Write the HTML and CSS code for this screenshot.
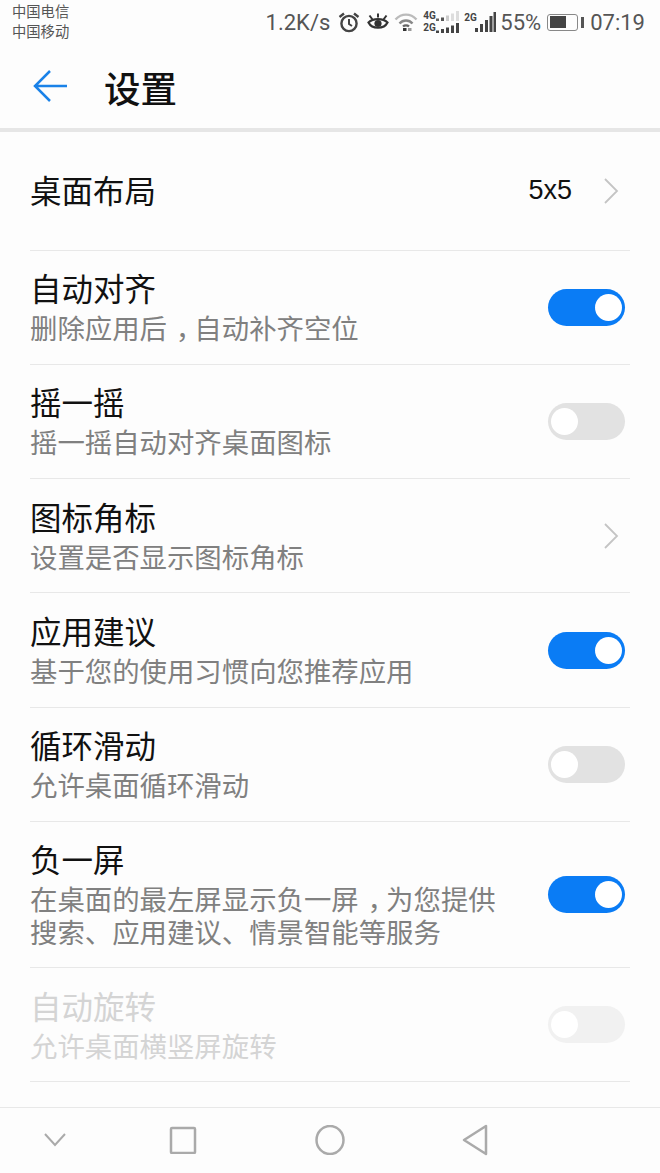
FILE: index.html
```html
<!DOCTYPE html>
<html lang="zh-CN">
<head>
    <meta charset="UTF-8">
    <meta name="viewport" content="width=device-width, initial-scale=1.0">
    <title>设置</title>
    <link rel="stylesheet" href="styles.css">
</head>
<body>

    <div class="screen">
        <!-- Status bar -->
        <div class="status-bar">
            <div class="carriers">
                <span>中国电信</span>
                <span>中国移动</span>
            </div>
            <div class="status-right">
                <span class="speed">1.2K/s</span>
                <svg class="ic-alarm" width="22" height="22" viewBox="0 0 22 22" fill="none" stroke="#444" stroke-width="2.400">
                    <circle cx="11" cy="12.500" r="7.600"/>
                    <path d="M11 8V13L14 15" stroke-width="2"/>
                    <path d="M1.500 6L6 2.500M20.500 6L16 2.500"/>
                </svg>
                <svg class="ic-eye" width="24" height="20" viewBox="0 0 24 20" fill="none" stroke="#333" stroke-width="2.200">
                    <path d="M2.500 10.500C7 6 17 6 21.500 10.500C18 17.500 6 17.500 2.500 10.500Z"/>
                    <circle cx="12" cy="11.500" r="3.600" fill="#333" stroke="none"/>
                    <path d="M3.500 3.500L6.500 7.500M12 1.500V5.500M20.500 3.500L17.500 7.500" stroke-width="2"/>
                </svg>
                <svg class="ic-wifi" width="24" height="20" viewBox="0 0 24 20" fill="none">
                    <path d="M1.500 7.500C7.500 1 16.500 1 22.500 7.500" stroke="#bbb" stroke-width="2.400"/>
                    <path d="M5.500 11.500C9 7.500 15 7.500 18.500 11.500" stroke="#888" stroke-width="2.400"/>
                    <path d="M9 14.500C10.500 13 13.500 13 15 14.500" stroke="#666" stroke-width="2.200"/>
                    <rect x="9" y="16" width="3.500" height="3" fill="#333"/>
                    <rect x="14" y="16" width="3.500" height="3" fill="#999"/>
                </svg>
                <div class="sim sim-double">
                    <div class="sim-labels"><span>4G</span><span>2G</span></div>
                    <svg width="23" height="24" viewBox="0 0 23 24">
                        <rect x="0" y="8.500" width="3" height="2.500" fill="#666"/>
                        <rect x="5" y="7.500" width="3" height="3.500" fill="#555"/>
                        <rect x="10" y="5.500" width="3" height="5.500" fill="#ccc"/>
                        <rect x="15" y="3.500" width="3" height="7.500" fill="#ddd"/>
                        <rect x="20" y="1" width="3" height="10" fill="#ddd"/>
                        <rect x="0" y="20.500" width="3" height="2.500" fill="#444"/>
                        <rect x="5" y="19" width="3" height="4" fill="#444"/>
                        <rect x="10" y="17.500" width="3" height="5.500" fill="#444"/>
                        <rect x="15" y="15.500" width="3" height="7.500" fill="#444"/>
                        <rect x="20" y="13" width="3" height="10" fill="#444"/>
                    </svg>
                </div>
                <div class="sim sim-single">
                    <span class="sim-tag">2G</span>
                    <svg width="21" height="20" viewBox="0 0 21 20">
                        <rect x="0" y="16" width="3" height="4" fill="#444"/>
                        <rect x="5" y="12" width="3" height="8" fill="#444"/>
                        <rect x="10" y="8" width="3" height="12" fill="#444"/>
                        <rect x="14.500" y="4" width="3" height="16" fill="#444"/>
                        <rect x="18.500" y="0" width="2.500" height="20" fill="#444"/>
                    </svg>
                </div>
                <span class="battery-text">55%</span>
                <div class="battery">
                    <div class="battery-body"><div class="battery-level"></div></div>
                    <div class="battery-tip"></div>
                </div>
                <span class="clock">07:19</span>
            </div>
        </div>

        <!-- Title -->
        <div class="title-bar">
            <svg class="back" width="36" height="34" viewBox="0 0 36 34" fill="none" stroke="#1a82e8" stroke-width="2.500">
                <path d="M17 2L2 17L17 32M2 17H34"/>
            </svg>
            <h1>设置</h1>
        </div>

        <!-- Settings list -->
        <div class="list">
            <div class="row row-single">
                <div class="row-text"><div class="row-title">桌面布局</div></div>
                <span class="row-value">5x5</span>
                <svg class="chevron" width="16" height="28" viewBox="0 0 16 28" fill="none" stroke="#c4c4c4" stroke-width="1.800"><path d="M2 2L14 14L2 26"/></svg>
            </div>
            <div class="row">
                <div class="row-text">
                    <div class="row-title">自动对齐</div>
                    <div class="row-sub">删除应用后<span class="comma">，</span>自动补齐空位</div>
                </div>
                <div class="switch on"><div class="knob"></div></div>
            </div>
            <div class="row">
                <div class="row-text">
                    <div class="row-title">摇一摇</div>
                    <div class="row-sub">摇一摇自动对齐桌面图标</div>
                </div>
                <div class="switch"><div class="knob"></div></div>
            </div>
            <div class="row">
                <div class="row-text">
                    <div class="row-title">图标角标</div>
                    <div class="row-sub">设置是否显示图标角标</div>
                </div>
                <svg class="chevron" width="16" height="28" viewBox="0 0 16 28" fill="none" stroke="#c4c4c4" stroke-width="1.800"><path d="M2 2L14 14L2 26"/></svg>
            </div>
            <div class="row">
                <div class="row-text">
                    <div class="row-title">应用建议</div>
                    <div class="row-sub">基于您的使用习惯向您推荐应用</div>
                </div>
                <div class="switch on"><div class="knob"></div></div>
            </div>
            <div class="row">
                <div class="row-text">
                    <div class="row-title">循环滑动</div>
                    <div class="row-sub">允许桌面循环滑动</div>
                </div>
                <div class="switch"><div class="knob"></div></div>
            </div>
            <div class="row row-tall">
                <div class="row-text">
                    <div class="row-title">负一屏</div>
                    <div class="row-sub">在桌面的最左屏显示负一屏<span class="comma">，</span>为您提供<br>搜索、应用建议、情景智能等服务</div>
                </div>
                <div class="switch on"><div class="knob"></div></div>
            </div>
            <div class="row disabled">
                <div class="row-text">
                    <div class="row-title">自动旋转</div>
                    <div class="row-sub">允许桌面横竖屏旋转</div>
                </div>
                <div class="switch"><div class="knob"></div></div>
            </div>
        </div>

        <!-- Navigation bar -->
        <div class="nav-bar">
            <svg class="nav-down" width="24" height="16" viewBox="0 0 24 16" fill="none" stroke="#aaa" stroke-width="2"><path d="M2 2L12 13L22 2"/></svg>
            <svg class="nav-square" width="28" height="28" viewBox="0 0 28 28" fill="none" stroke="#aaa" stroke-width="2.500"><rect x="2" y="2" width="24" height="25" rx="1"/></svg>
            <svg class="nav-circle" width="30" height="30" viewBox="0 0 30 30" fill="none" stroke="#aaa" stroke-width="2.500"><ellipse cx="15" cy="15" rx="13.500" ry="14"/></svg>
            <svg class="nav-back" width="28" height="32" viewBox="0 0 28 32" fill="none" stroke="#aaa" stroke-width="2.500" stroke-linejoin="round"><path d="M25 2V30L3 16Z"/></svg>
        </div>
    </div>

</body>
</html>
```

FILE: styles.css
```css
/* General reset */
* {
    margin: 0;
    padding: 0;
    box-sizing: border-box;
}

body {
    font-family: 'Roboto', 'Noto Sans CJK SC', sans-serif;
    background-color: #fdfdfd;
    color: #1a1a1a;
}

.screen {
    width: 660px;
    height: 1173px;
    display: flex;
    flex-direction: column;
    overflow: hidden;
}

/* Status bar */
.status-bar {
    height: 44px;
    display: flex;
    justify-content: space-between;
    align-items: center;
    padding: 0 15px 0 12px;
    color: #555;
}

.carriers {
    display: flex;
    flex-direction: column;
    font-size: 14.3px;
    line-height: 20px;
}

.status-right {
    display: flex;
    align-items: center;
}

.speed,
.battery-text,
.clock {
    font-size: 22px;
    color: #555;
}

.ic-alarm {
    margin-left: 8px;
}

.ic-eye {
    margin-left: 6px;
}

.ic-wifi {
    margin-left: 4px;
}

.sim {
    display: flex;
}

.sim-double {
    margin-left: 5px;
}

.sim-labels {
    width: 13px;
    display: flex;
    flex-direction: column;
    font-size: 10px;
    line-height: 12px;
    font-weight: 700;
    color: #444;
}

.sim-single {
    margin-left: 5px;
}

.sim-tag {
    width: 11px;
    font-size: 10px;
    line-height: 12px;
    font-weight: 700;
    color: #444;
}

.battery-text {
    margin-left: 4px;
}

.battery {
    display: flex;
    align-items: center;
    margin-left: 6px;
}

.battery-body {
    width: 31px;
    height: 17px;
    border: 1.5px solid #888;
    border-radius: 3px;
    padding: 1.5px;
}

.battery-level {
    width: 62%;
    height: 100%;
    background-color: #444;
}

.battery-tip {
    width: 3px;
    height: 11px;
    background-color: #555;
    margin-left: 3px;
}

.clock {
    margin-left: 6px;
}

/* Title */
.title-bar {
    height: 88px;
    display: flex;
    align-items: center;
    padding-left: 33px;
    border-bottom: 4px solid #e6e6e6;
}

.title-bar h1 {
    font-size: 36.5px;
    line-height: 44px;
    font-weight: 500;
    margin-left: 35px;
    padding-top: 10px;
    color: #111;
}

/* Settings list */
.list {
    flex: 1;
    padding: 0 30px;
}

.row {
    height: 114.3px;
    display: flex;
    align-items: center;
    border-bottom: 1.5px solid #e8e8e8;
    padding-right: 5px;
}

.row-single {
    height: 118.5px;
}

.row-single .row-text {
    padding-top: 4px;
}

.row-tall {
    height: 146px;
}

.row-text {
    flex: 1;
    padding-top: 1px;
}

.row-title {
    font-size: 31.5px;
    line-height: 46px;
    color: #111;
}

.row-sub {
    font-size: 27.4px;
    line-height: 33px;
    color: #808080;
}

/* the comma sits in the middle of its cell on the device font */
.comma {
    margin-left: 0.32em;
    letter-spacing: -0.32em;
}

.row-value {
    font-family: 'Liberation Sans', sans-serif;
    font-size: 27px;
    margin-right: 31px;
    color: #111;
}

.chevron {
    margin-right: 6px;
}

.switch {
    width: 77px;
    height: 37px;
    border-radius: 19px;
    background-color: #e2e2e2;
    padding: 5px 3px;
    flex-shrink: 0;
}

.knob {
    width: 27px;
    height: 27px;
    border-radius: 50%;
    background-color: #fff;
}

.switch.on {
    background-color: #0a7cf5;
    display: flex;
    justify-content: flex-end;
}

.disabled .row-title,
.disabled .row-sub {
    color: #d4d4d4;
}

.disabled .switch {
    background-color: #f1f1f1;
}

/* Navigation bar */
.nav-bar {
    height: 66px;
    border-top: 1.5px solid #e8e8e8;
    display: flex;
    align-items: center;
    padding: 0 0 2px 43px;
}

.nav-square {
    margin-left: 102px;
}

.nav-circle {
    margin-left: 118px;
}

.nav-back {
    margin-left: 116px;
}
```
